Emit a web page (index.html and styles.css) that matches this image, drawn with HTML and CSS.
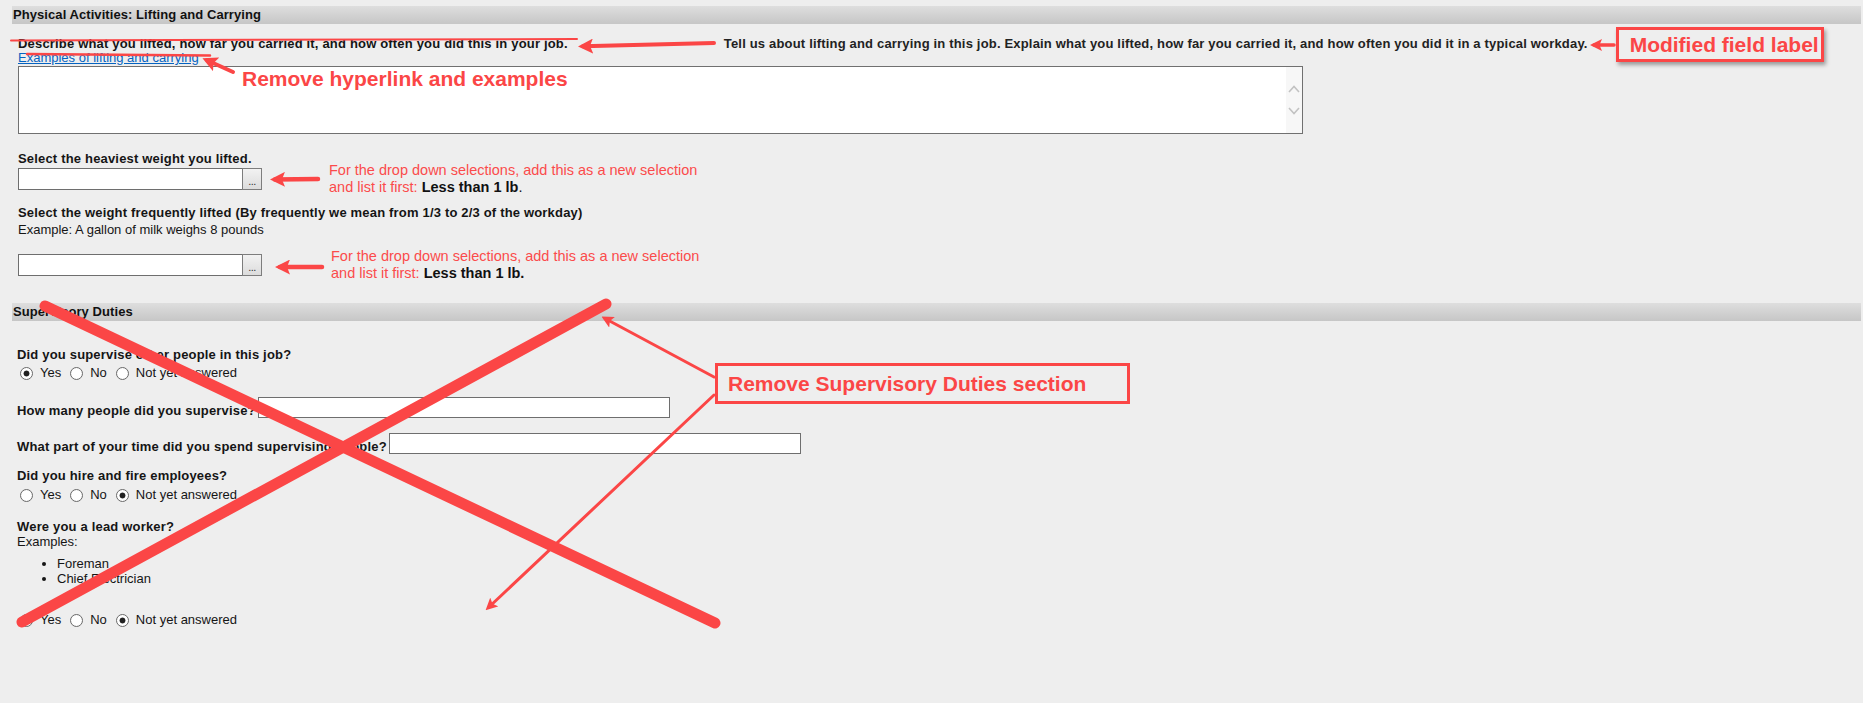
FILE: index.html
```html
<!DOCTYPE html>
<html lang="en">
<head>
<meta charset="utf-8">
<title>Physical Activities</title>
<link rel="stylesheet" href="styles.css">
</head>
<body>
<div class="page">
  <div class="section-title">Physical Activities: Lifting and Carrying</div>
  <div class="section-body">
    <div class="label-row">
      <span class="label">Describe what you lifted, how far you carried it, and how often you did this in your job.</span>
      <span class="label new-label">Tell us about lifting and carrying in this job. Explain what you lifted, how far you carried it, and how often you did it in a typical workday.</span>
      <span class="callout callout-shadow">Modified field label</span>
    </div>
    <a class="examples-link" href="#">Examples of lifting and carrying</a>
    <div class="memo">
      <textarea class="memo-input"></textarea>
      <div class="memo-scroll">
        <svg class="chev" width="12" height="8" viewBox="0 0 12 8"><polyline points="1,7 6,1.5 11,7" fill="none" stroke="#c2c2c2" stroke-width="1.6"/></svg>
        <svg class="chev" width="12" height="8" viewBox="0 0 12 8"><polyline points="1,1 6,6.5 11,1" fill="none" stroke="#c2c2c2" stroke-width="1.6"/></svg>
      </div>
    </div>
    <div class="label q-heaviest">Select the heaviest weight you lifted.</div>
    <div class="combo-row">
      <div class="combo"><input class="combo-input" type="text"><span class="combo-btn">...</span></div>
      <p class="note">For the drop down selections, add this as a new selection<br>and list it first: <b>Less than 1 lb</b><span class="dark">.</span></p>
    </div>
    <div class="label q-freq">Select the weight frequently lifted (By frequently we mean from 1/3 to 2/3 of the workday)</div>
    <div class="hint q-example">Example: A gallon of milk weighs 8 pounds</div>
    <div class="combo-row combo-row-2">
      <div class="combo"><input class="combo-input" type="text"><span class="combo-btn">...</span></div>
      <p class="note">For the drop down selections, add this as a new selection<br>and list it first: <b>Less than 1 lb.</b></p>
    </div>
  </div>

  <div class="section-title sup-title">Supervisory Duties</div>
  <div class="section-body sup-body">
    <div class="label q-sup">Did you supervise other people in this job?</div>
    <div class="radio-row">
      <label class="opt"><input type="radio" name="sup" checked><span>Yes</span></label>
      <label class="opt"><input type="radio" name="sup"><span>No</span></label>
      <label class="opt"><input type="radio" name="sup"><span>Not yet answered</span></label>
    </div>
    <div class="inline-field q-howmany"><span class="label">How many people did you supervise?</span><input class="text-input" type="text"></div>
    <div class="inline-field q-part"><span class="label">What part of your time did you spend supervising people?</span><input class="text-input" type="text"></div>
    <div class="label q-hire">Did you hire and fire employees?</div>
    <div class="radio-row radio-row-hire">
      <label class="opt"><input type="radio" name="hire"><span>Yes</span></label>
      <label class="opt"><input type="radio" name="hire"><span>No</span></label>
      <label class="opt"><input type="radio" name="hire" checked><span>Not yet answered</span></label>
    </div>
    <div class="label q-lead">Were you a lead worker?</div>
    <div class="hint q-examples">Examples:</div>
    <ul class="examples">
      <li>Foreman</li>
      <li>Chief Electrician</li>
    </ul>
    <div class="radio-row radio-row-lead">
      <label class="opt"><input type="radio" name="lead"><span>Yes</span></label>
      <label class="opt"><input type="radio" name="lead"><span>No</span></label>
      <label class="opt"><input type="radio" name="lead" checked><span>Not yet answered</span></label>
    </div>
  </div>

  <div class="markup-text link-note">Remove hyperlink and examples</div>

  <svg class="markup" width="1863" height="703" viewBox="0 0 1863 703">
    <defs>
      <marker id="head" markerUnits="userSpaceOnUse" markerWidth="15" markerHeight="15" viewBox="0 0 15 15" refX="10" refY="7.5" orient="auto">
        <path d="M0,0 L15,7.5 L0,15 L3,7.5 Z" fill="#fb4646"/>
      </marker>
      <marker id="headSmall" markerUnits="userSpaceOnUse" markerWidth="12" markerHeight="12" viewBox="0 0 12 12" refX="8" refY="6" orient="auto">
        <path d="M0,0 L12,6 L0,12 L2.5,6 Z" fill="#fb4646"/>
      </marker>
    </defs>
    <g stroke="#fb4646" fill="none" stroke-linecap="round">
      <line x1="11" y1="40.5" x2="577" y2="39" stroke-width="2"/>
      <line x1="27" y1="54" x2="210" y2="55.5" stroke-width="2.5"/>
      <line x1="714" y1="43" x2="583" y2="46.3" stroke-width="4" marker-end="url(#head)"/>
      <line x1="233" y1="72" x2="207" y2="60.3" stroke-width="4" marker-end="url(#head)"/>
      <line x1="1614" y1="45" x2="1594" y2="45" stroke-width="3.5" marker-end="url(#headSmall)"/>
      <line x1="318" y1="179" x2="275" y2="179.5" stroke-width="4.5" marker-end="url(#head)"/>
      <line x1="322" y1="267" x2="280" y2="267" stroke-width="4.5" marker-end="url(#head)"/>
      <line x1="714" y1="377" x2="605" y2="318.5" stroke-width="3" marker-end="url(#headSmall)"/>
      <line x1="714" y1="395" x2="488.5" y2="607.5" stroke-width="3" marker-end="url(#headSmall)"/>
      <line x1="22" y1="622" x2="606" y2="304" stroke-width="11"/>
      <line x1="45" y1="306" x2="715" y2="623" stroke-width="11"/>
    </g>
  </svg>

  <div class="markup-text callout sup-callout">Remove Supervisory Duties section</div>
</div>
</body>
</html>
```

FILE: styles.css
```css
body {
  margin: 0;
  background: #eeeeee;
  font-family: "Liberation Sans", Arial, sans-serif;
  font-size: 13px;
  color: #151515;
}

.page {
  position: relative;
  width: 1863px;
  height: 703px;
  padding: 6px 2px 0 12px;
  box-sizing: border-box;
  overflow: hidden;
}

.section-title {
  height: 18px;
  line-height: 18px;
  padding-left: 1px;
  font-weight: bold;
  color: #111;
  letter-spacing: 0.07px;
  background: linear-gradient(#dedede, #c6c6c6);
}

.section-body {
  padding-left: 6px;
}

.label {
  font-weight: bold;
  line-height: 14px;
  letter-spacing: 0.18px;
  white-space: nowrap;
}

.hint {
  line-height: 14px;
}

/* first field */
.label-row {
  display: flex;
  align-items: center;
  height: 14px;
  margin-top: 13px;
}

.new-label {
  margin-left: 156px;
  color: #222;
}

.callout {
  box-sizing: border-box;
  border: 3px solid #fb4646;
  color: #fb4646;
  font-weight: bold;
  font-size: 21px;
  white-space: nowrap;
}

.callout-shadow {
  flex: none;
  margin-left: 28px;
  width: 208px;
  height: 35px;
  line-height: 29px;
  padding-left: 11px;
  box-shadow: 2px 3px 4px rgba(0, 0, 0, 0.35);
}

.examples-link {
  display: block;
  width: max-content;
  line-height: 14px;
  color: #0563c1;
  text-decoration: underline;
}

.memo {
  display: flex;
  margin-top: 1px;
  width: 1285px;
  height: 68px;
  box-sizing: border-box;
  border: 1px solid #707070;
  background: #fff;
}

.memo-input {
  flex: 1;
  border: 0;
  margin: 0;
  padding: 2px;
  resize: none;
  outline: none;
  background: #fff;
  font: inherit;
}

.memo-scroll {
  width: 16px;
  background: #f7f7f7;
  display: flex;
  flex-direction: column;
  align-items: center;
  padding-top: 18px;
  gap: 14px;
  box-sizing: border-box;
}

.chev {
  display: block;
}

.q-heaviest {
  margin-top: 18px;
}

.combo-row {
  display: flex;
  align-items: center;
  height: 22px;
  margin-top: 2px;
  gap: 67px;
}

.combo-row-2 {
  margin-top: 17px;
  gap: 69px;
}

.combo {
  display: flex;
  height: 22px;
}

.combo-input {
  width: 224px;
  height: 22px;
  box-sizing: border-box;
  margin: 0;
  border: 1px solid #6e6e6e;
  border-right: 0;
  background: #fff;
  font: inherit;
}

.combo-btn {
  width: 20px;
  height: 22px;
  box-sizing: border-box;
  border: 1px solid #7d7d7d;
  background: linear-gradient(#f2f2f2, #dcdcdc);
  color: #333;
  font-size: 11px;
  line-height: 24px;
  text-align: center;
  letter-spacing: -0.5px;
}

.note {
  margin: 0;
  font-size: 14.5px;
  line-height: 16.6px;
  color: #fb4b4b;
  white-space: nowrap;
}

.note b,
.note .dark {
  color: #111;
}

.q-freq {
  margin-top: 16px;
}

.q-example {
  margin-top: 3px;
}

.sup-title {
  margin-top: 27px;
}

.sup-body {
  padding-left: 5px;
}

.q-sup {
  margin-top: 27px;
}

.radio-row {
  display: flex;
  align-items: center;
  height: 14px;
  margin-top: 4px;
}

.radio-row-hire {
  margin-top: 5px;
}

.radio-row-lead {
  margin-top: 27px;
}

.opt {
  display: flex;
  align-items: center;
  margin-right: 6px;
  line-height: 14px;
}

.opt input {
  appearance: none;
  -webkit-appearance: none;
  width: 13px;
  height: 13px;
  margin: 0 7px 0 3px;
  border: 1px solid #6a6a6a;
  border-radius: 50%;
  background: radial-gradient(circle, #ffffff 55%, #e9e9e9 100%);
  box-sizing: border-box;
}

.opt input:checked {
  background: radial-gradient(circle, #222 0 2.6px, #ffffff 3.3px);
}

.inline-field {
  display: flex;
  align-items: flex-end;
  height: 21px;
  gap: 2px;
}

.q-howmany {
  margin-top: 17px;
}

.q-part {
  margin-top: 15px;
}

.text-input {
  width: 412px;
  height: 21px;
  box-sizing: border-box;
  margin: 0;
  border: 1px solid #6e6e6e;
  background: #fff;
  font: inherit;
}

.q-hire {
  margin-top: 15px;
}

.q-lead {
  margin-top: 18px;
}

.q-examples {
  margin-top: 1px;
}

.examples {
  margin: 7px 0 0;
  padding-left: 40px;
}

.examples li {
  line-height: 15px;
}

/* review markup layered over the form */
.markup {
  position: absolute;
  top: 0;
  left: 0;
  pointer-events: none;
}

.markup-text {
  position: absolute;
  color: #fb4646;
  font-weight: bold;
  font-size: 21px;
  white-space: nowrap;
}

.link-note {
  left: 242px;
  top: 67px;
  line-height: 24px;
}

.sup-callout {
  left: 715px;
  top: 363px;
  width: 415px;
  height: 41px;
  line-height: 35px;
  padding-left: 10px;
}
```
